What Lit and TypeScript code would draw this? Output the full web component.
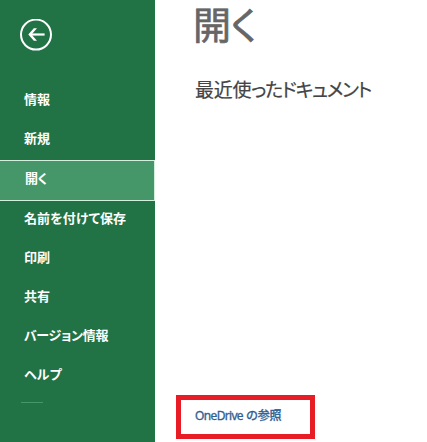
import { LitElement, html, css } from "lit";
import { customElement, property } from "lit/decorators.js";
import { classMap } from "lit/directives/class-map.js";

@customElement("back-button")
class BackButton extends LitElement {
  static styles = css`
    :host { display: block; width: 32px; height: 32px; }
    svg { display: block; }
  `;
  render() {
    return html`<svg width="32" height="32" viewBox="0 0 32 32" fill="none" stroke="#fff">
      <circle cx="16" cy="15.6" r="15" stroke-width="2"></circle>
      <path d="M24.6 15.5H10.5" stroke-width="2.2"></path>
      <path d="M17 9.2H13.8L8.3 15.5L13.8 21.8H17L11.5 15.5Z" fill="#fff" stroke="none"></path>
    </svg>`;
  }
}

@customElement("menu-item")
class MenuItem extends LitElement {
  @property() label = "";
  @property({ type: Boolean }) active = false;
  @property({ type: Boolean }) tight = false;
  static styles = css`
    :host { display: block; }
    .item {
      box-sizing: border-box;
      height: 39px;
      padding-left: 24px;
      line-height: 38px;
      font-size: 13px;
      font-weight: 600;
      font-feature-settings: "palt";
      letter-spacing: 0.1px;
      color: #fff;
      white-space: nowrap;
    }
    .tight { letter-spacing: -0.3px; }
    .active {
      height: 41px;
      margin: 2px 0 -2px;
      padding-left: 25px;
      line-height: 34px;
      letter-spacing: -0.5px;
      background: #459668;
      border: 1px solid #d3f0df;
      border-left: 0;
    }
  `;
  render() {
    const classes = { item: true, active: this.active, tight: this.tight };
    return html`<div class=${classMap(classes)}>${this.label}</div>`;
  }
}

@customElement("app-root")
class AppRoot extends LitElement {
  static styles = css`
    :host {
      display: flex;
      width: 427px;
      height: 442px;
      background: #fff;
      font-family: "Open Sans", "Noto Sans CJK JP", sans-serif;
    }
    .side {
      flex: none;
      box-sizing: border-box;
      width: 155px;
      height: 442px;
      padding-top: 19px;
      background: #217346;
    }
    .back { margin: 0 0 29px 20px; }
    .rule { width: 22px; height: 1px; margin: 8px 0 0 21px; background: #459668; }
    .main { flex: 1; display: flex; flex-direction: column; align-items: flex-start; }
    .title {
      margin: 0 0 0 38px;
      height: 52px;
      font-family: "Noto Sans CJK JP", sans-serif;
      line-height: 46px;
      font-size: 38px;
      font-weight: 400;
      font-feature-settings: "palt";
      color: #666;
      -webkit-text-stroke: 0.7px #666;
    }
    .sub {
      margin: 23px 0 0 40px;
      height: 30px;
      line-height: 31px;
      font-size: 19px;
      font-weight: 400;
      font-feature-settings: "palt";
      color: #444;
      -webkit-text-stroke: 0.2px #444;
      white-space: nowrap;
    }
    .kanji { letter-spacing: -0.3px; }
    .kana { letter-spacing: -1.3px; }
    .link {
      box-sizing: border-box;
      width: 139px;
      height: 44px;
      margin: 290px 0 0 21px;
      padding-left: 14px;
      border: 5px solid #e81c24;
      line-height: 32px;
      font-size: 12px;
      font-weight: 400;
      color: #2f5f93;
      -webkit-text-stroke: 0.4px #2f5f93;
      white-space: nowrap;
    }
    .latin { letter-spacing: -0.6px; }
    .rest { letter-spacing: -0.2px; }
  `;
  render() {
    const before = ["情報", "新規"];
    const after = ["名前を付けて保存", "印刷", "共有", "バージョン情報", "ヘルプ"];
    return html`
      <nav class="side">
        <back-button class="back"></back-button>
        ${before.map((t) => html`<menu-item label=${t}></menu-item>`)}
        <menu-item label="開く" active></menu-item>
        ${after.map((t) => html`<menu-item label=${t} ?tight=${t.startsWith("バ")}></menu-item>`)}
        <div class="rule"></div>
      </nav>
      <main class="main">
        <h1 class="title">開く</h1>
        <h2 class="sub"><span class="kanji">最近使</span><span class="kana">ったドキュメント</span></h2>
        <div class="link"><span class="latin">OneDrive</span><span class="rest"> の参照</span></div>
      </main>
    `;
  }
}
